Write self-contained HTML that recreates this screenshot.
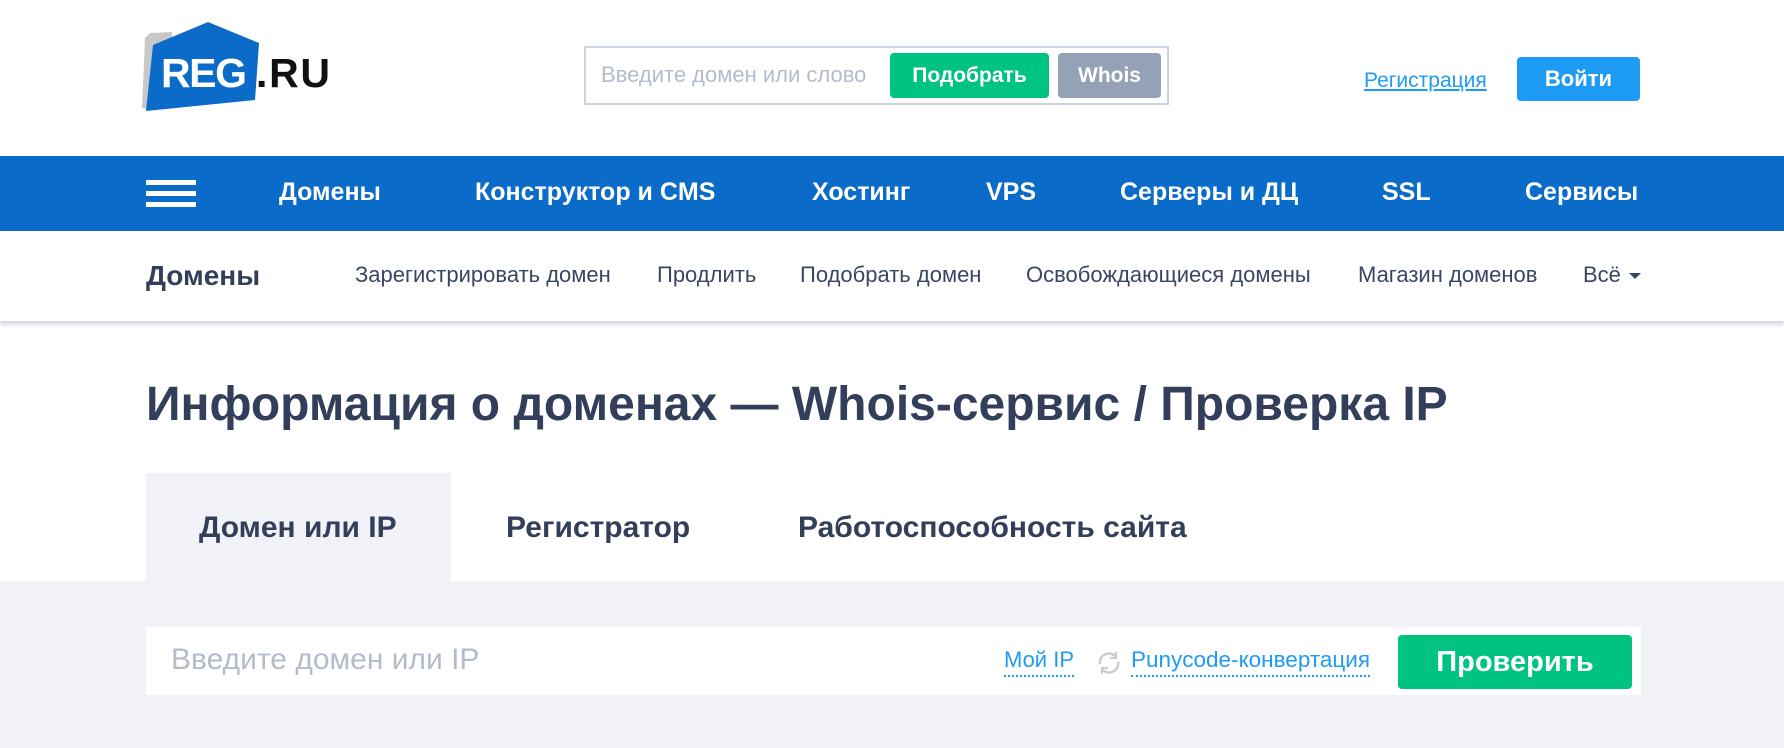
<!DOCTYPE html>
<html><head><meta charset="utf-8"><style>
*{margin:0;padding:0;box-sizing:border-box}
body{width:1784px;height:748px;position:relative;overflow:hidden;background:#fff;font-family:"Liberation Sans",Arial,sans-serif;color:#333e5a}
.a{position:absolute;white-space:nowrap}
.nav{position:absolute;left:0;top:156px;width:1784px;height:75px;background:#0a6bc8}
.nav .a{color:#fff;font-weight:bold;font-size:25px;top:22px}
.sub{position:absolute;left:0;top:231px;width:1784px;height:90px;background:#fff;box-shadow:0 3px 5px rgba(60,70,110,.25)}
.sub .a{font-size:22px;top:31px;color:#3a4566}
.gray{position:absolute;left:0;top:581px;width:1784px;height:167px;background:#f1f2f7}
</style></head><body>
<svg class="a" style="left:138px;top:18px" width="200" height="100" viewBox="138 18 200 100">
<path d="M145 38 L150 33 L172 32 L172 45 L153 45 L147 109 L142 108 Z" fill="#c8c8c8"/>
<path d="M208 22 L259 43 L255 100 L146 111 L153 45 Z" fill="#0a6bc8"/>
<text x="161" y="87" font-family="Liberation Sans" font-weight="bold" font-size="41" fill="#fff" textLength="86">REG</text>
<text x="256" y="87" font-family="Liberation Sans" font-weight="bold" font-size="41" fill="#111" textLength="74">.RU</text>
</svg>
<div class="a" style="left:584px;top:46px;width:585px;height:59px;border:2px solid #cdd3de"></div>
<div class="a" style="left:601px;top:62px;font-size:22px;color:#b4bccb">Введите домен или слово</div>
<div class="a" style="left:890px;top:53px;width:159px;height:45px;background:#00c281;border-radius:4px;color:#fff;font-weight:bold;font-size:21px;text-align:center;line-height:45px">Подобрать</div>
<div class="a" style="left:1058px;top:53px;width:103px;height:45px;background:#94a1b6;border-radius:4px;color:#fff;font-weight:bold;font-size:21px;text-align:center;line-height:45px">Whois</div>
<div class="a" style="left:1364px;top:69px;font-size:21px;color:#1e9cf5;text-decoration:underline">Регистрация</div>
<div class="a" style="left:1517px;top:57px;width:123px;height:44px;background:#1e9cf5;border-radius:4px;color:#fff;font-weight:bold;font-size:22px;text-align:center;line-height:44px">Войти</div>
<div class="nav">
<div class="a" style="left:146px;top:24px;width:50px;height:5px;background:#fff;box-shadow:0 11px 0 #fff,0 22px 0 #fff"></div>
<div class="a" style="left:279px">Домены</div>
<div class="a" style="left:475px">Конструктор и CMS</div>
<div class="a" style="left:812px">Хостинг</div>
<div class="a" style="left:986px">VPS</div>
<div class="a" style="left:1120px">Серверы и ДЦ</div>
<div class="a" style="left:1382px">SSL</div>
<div class="a" style="left:1525px">Сервисы</div>
</div>
<div class="sub">
<div class="a" style="left:146px;top:29px;font-size:28px;font-weight:bold;color:#333e5a">Домены</div>
<div class="a" style="left:355px">Зарегистрировать домен</div>
<div class="a" style="left:657px">Продлить</div>
<div class="a" style="left:800px">Подобрать домен</div>
<div class="a" style="left:1026px">Освобождающиеся домены</div>
<div class="a" style="left:1358px">Магазин доменов</div>
<div class="a" style="left:1583px">Всё <span style="display:inline-block;border:6px solid transparent;border-top:6px solid #3a4566;border-bottom:0;vertical-align:middle;margin-left:2px"></span></div>
</div>
<div class="a" style="left:146px;top:377px;font-size:48px;font-weight:bold;color:#333e5a">Информация о доменах — Whois-сервис / Проверка IP</div>
<div class="gray"></div>
<div class="a" style="left:146px;top:473px;width:305px;height:108px;background:#f1f2f7"></div>
<div class="a" style="left:199px;top:511px;font-size:30px;font-weight:bold">Домен или IP</div>
<div class="a" style="left:506px;top:511px;font-size:30px;font-weight:bold">Регистратор</div>
<div class="a" style="left:798px;top:511px;font-size:30px;font-weight:bold">Работоспособность сайта</div>
<div class="a" style="left:146px;top:627px;width:1495px;height:68px;background:#fff"></div>
<div class="a" style="left:171px;top:643px;font-size:30px;color:#b4bccb">Введите домен или IP</div>
<div class="a" style="left:1004px;top:647px;font-size:22px;color:#1e9cf5;border-bottom:2px dotted #1e9cf5;padding-bottom:2px">Мой IP</div>
<svg class="a" style="left:1096px;top:650px" width="26" height="26" viewBox="0 0 26 26" fill="none" stroke="#c8ccd4" stroke-width="2.5"><path d="M4 14 A9 9 0 0 1 20 7"/><path d="M22 12 A9 9 0 0 1 6 19"/><path d="M20 2 V8 H14" stroke-width="2"/><path d="M6 24 V18 H12" stroke-width="2"/></svg>
<div class="a" style="left:1131px;top:647px;font-size:22.5px;color:#1e9cf5;border-bottom:2px dotted #1e9cf5;padding-bottom:2px">Punycode-конвертация</div>
<div class="a" style="left:1398px;top:635px;width:234px;height:54px;background:#00c281;border-radius:4px;color:#fff;font-weight:bold;font-size:29px;text-align:center;line-height:54px">Проверить</div>
</body></html>
